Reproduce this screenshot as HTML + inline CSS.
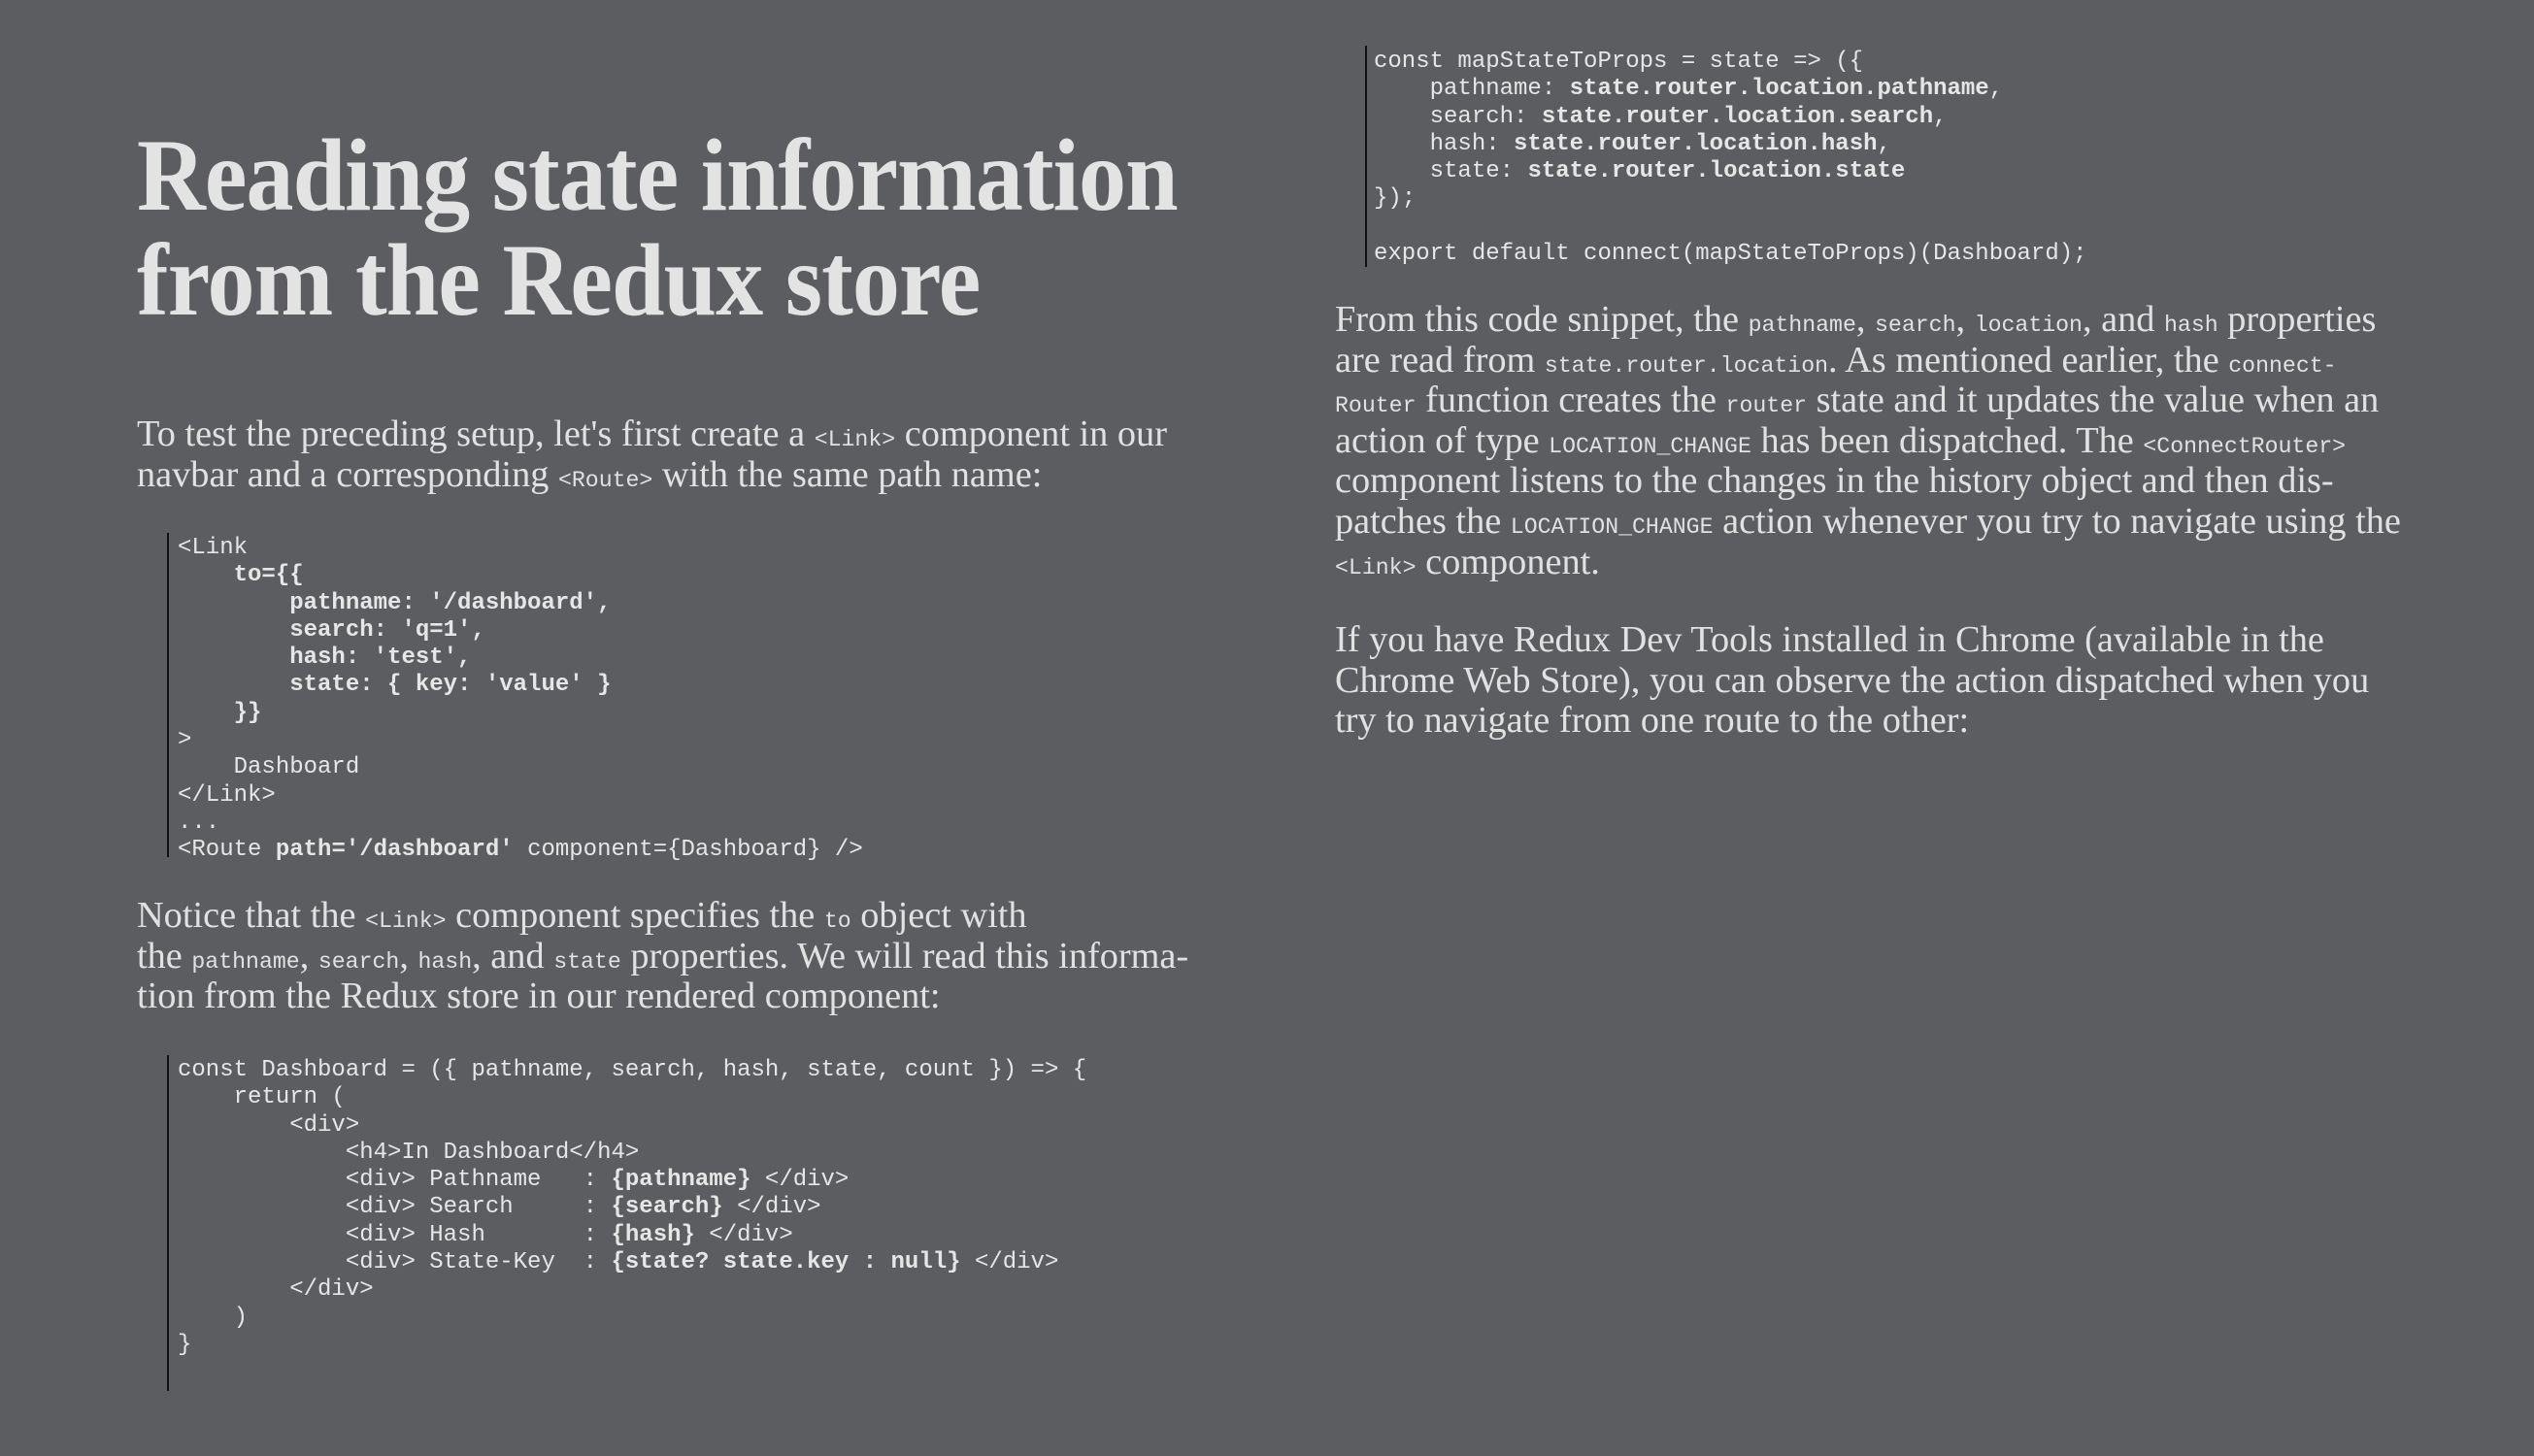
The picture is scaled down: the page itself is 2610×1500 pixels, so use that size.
<!DOCTYPE html>
<html><head><meta charset="utf-8"><style>
html,body{margin:0;padding:0}
body{width:2610px;height:1500px;background:#5c5d60;position:relative;overflow:hidden;color:#e1e1e1;font-family:"Liberation Serif",serif}
.a{position:absolute;white-space:nowrap}
h1{position:absolute;left:141px;top:127px;margin:0;font-size:106px;line-height:108px;font-weight:bold;color:#e3e3e3;letter-spacing:-1px;transform:scaleX(0.925);transform-origin:0 0;white-space:nowrap}
.p{font-size:38px;line-height:41.6px;transform:scaleX(1.008);transform-origin:0 0}
.p code{font-family:"Liberation Mono",monospace;font-size:23px;line-height:0}
.c{font-family:"Liberation Mono",monospace;font-size:24px;line-height:28.3px;white-space:pre;color:#e6e6e6}
.bar{position:absolute;width:2px;background:#111}
b{font-weight:bold}
</style></head><body>
<h1>Reading state information<br>from the Redux store</h1>

<div class="a p" style="left:141px;top:427px">To test the preceding setup, let's first create a <code>&lt;Link&gt;</code> component in our<br>navbar and a corresponding <code>&lt;Route&gt;</code> with the same path name:</div>

<div class="bar" style="left:172px;top:549px;height:334px"></div>
<div class="a c" style="left:183px;top:551px">&lt;Link
    <b>to={{
        pathname: '/dashboard',
        search: 'q=1',
        hash: 'test',
        state: { key: 'value' }
    }}</b>
&gt;
    Dashboard
&lt;/Link&gt;
...
&lt;Route <b>path='/dashboard'</b> component={Dashboard} /&gt;</div>

<div class="a p" style="left:141px;top:923px">Notice that the <code>&lt;Link&gt;</code> component specifies the <code>to</code> object with<br>the <code>pathname</code>, <code>search</code>, <code>hash</code>, and <code>state</code> properties. We will read this informa-<br>tion from the Redux store in our rendered component:</div>

<div class="bar" style="left:172px;top:1087px;height:346px"></div>
<div class="a c" style="left:183px;top:1089px">const Dashboard = ({ pathname, search, hash, state, count }) =&gt; {
    return (
        &lt;div&gt;
            &lt;h4&gt;In Dashboard&lt;/h4&gt;
            &lt;div&gt; Pathname   : <b>{pathname}</b> &lt;/div&gt;
            &lt;div&gt; Search     : <b>{search}</b> &lt;/div&gt;
            &lt;div&gt; Hash       : <b>{hash}</b> &lt;/div&gt;
            &lt;div&gt; State-Key  : <b>{state? state.key : null}</b> &lt;/div&gt;
        &lt;/div&gt;
    )
}</div>

<div class="bar" style="left:1406px;top:47px;height:228px"></div>
<div class="a c" style="left:1415px;top:50px">const mapStateToProps = state =&gt; ({
    pathname: <b>state.router.location.pathname</b>,
    search: <b>state.router.location.search</b>,
    hash: <b>state.router.location.hash</b>,
    state: <b>state.router.location.state</b>
});

export default connect(mapStateToProps)(Dashboard);</div>

<div class="a p" style="left:1375px;top:309px">From this code snippet, the <code>pathname</code>, <code>search</code>, <code>location</code>, and <code>hash</code> properties<br>are read from <code>state.router.location</code>. As mentioned earlier, the <code>connect-</code><br><code>Router</code> function creates the <code>router</code> state and it updates the value when an<br>action of type <code>LOCATION_CHANGE</code> has been dispatched. The <code>&lt;ConnectRouter&gt;</code><br>component listens to the changes in the history object and then dis-<br>patches the <code>LOCATION_CHANGE</code> action whenever you try to navigate using the<br><code>&lt;Link&gt;</code> component.</div>

<div class="a p" style="left:1375px;top:639px">If you have Redux Dev Tools installed in Chrome (available in the<br>Chrome Web Store), you can observe the action dispatched when you<br>try to navigate from one route to the other:</div>
</body></html>
